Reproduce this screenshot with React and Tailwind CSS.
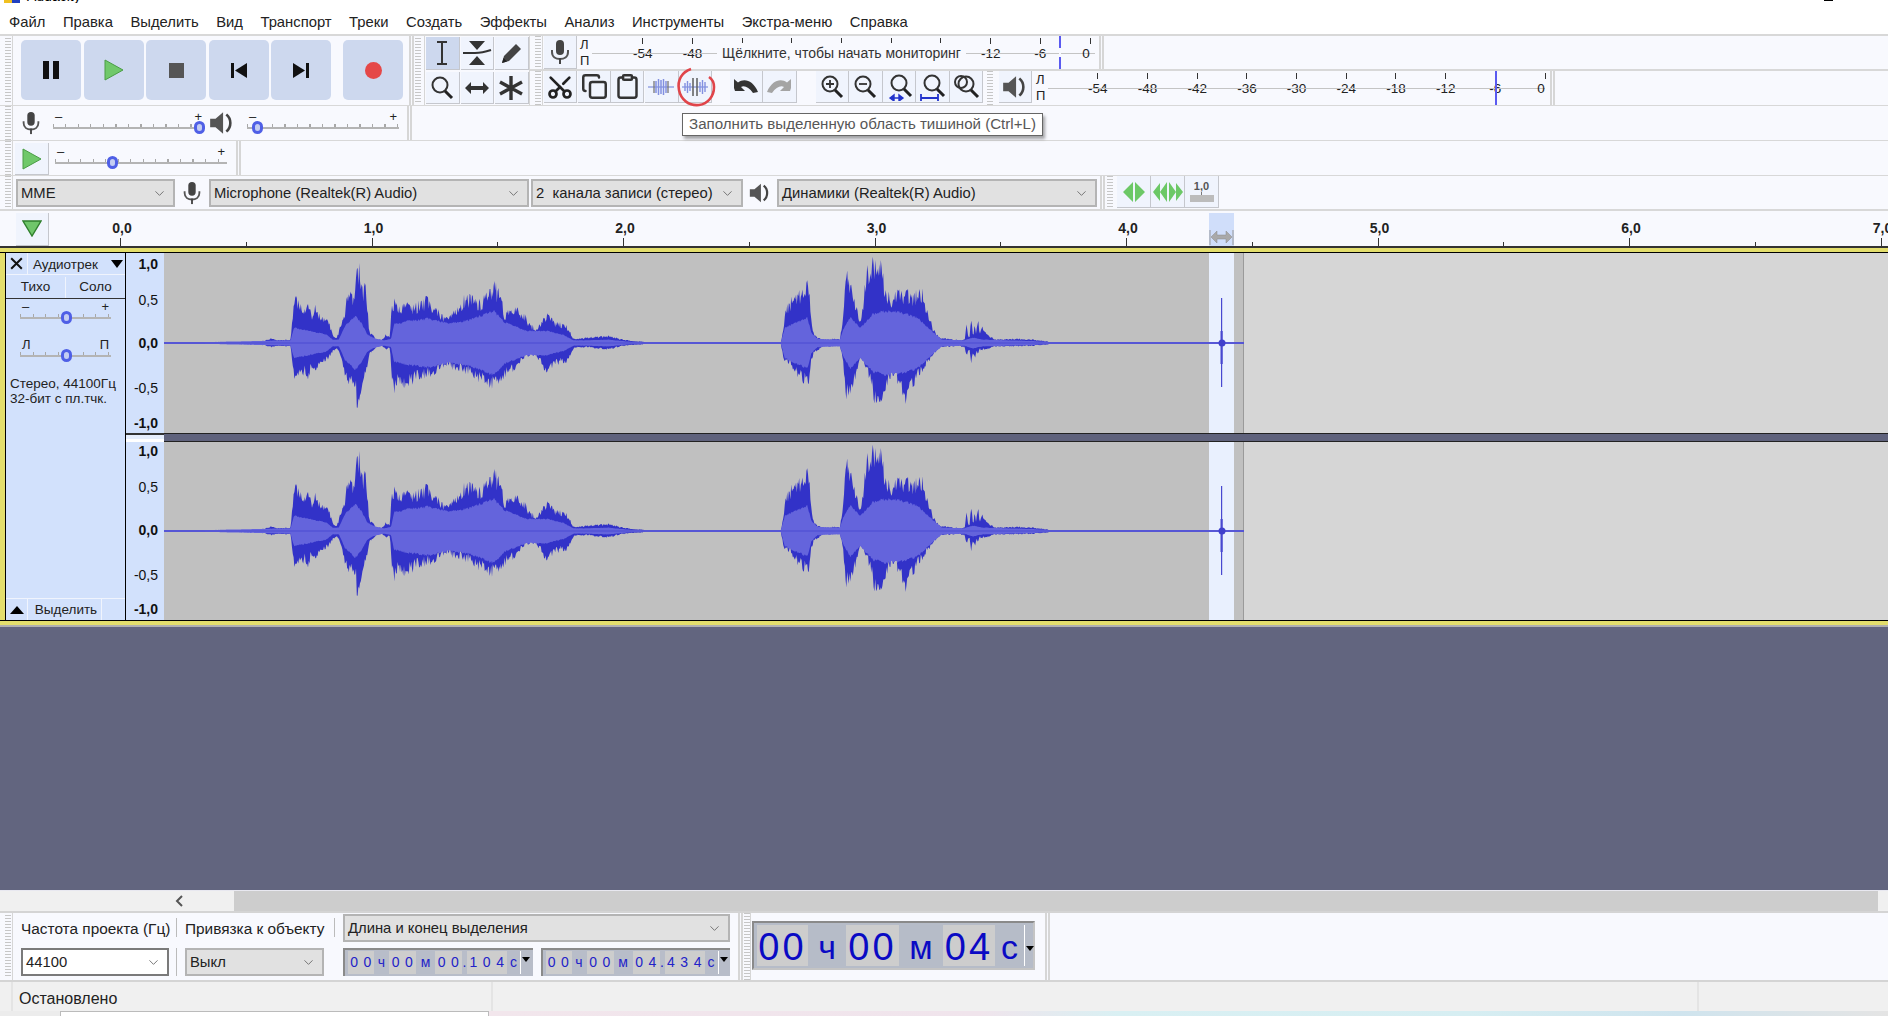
import React from 'react';
import { ChevronDown, Scissors, Copy, Clipboard } from 'lucide-react';

const MENU = ['Файл', 'Правка', 'Выделить', 'Вид', 'Транспорт', 'Треки', 'Создать', 'Эффекты', 'Анализ', 'Инструменты', 'Экстра-меню', 'Справка'];

// waveform envelopes, read off the picture: [x, peak up, peak down]
const PEAKS_A = [[402,1,1],[648,1,1],[650,8,8],[665,12,12],[680,8,8],[712,10,10],[716,60,50],[720,125,105],[725,120,100],[735,115,95],[745,85,80],[755,110,95],[765,70,65],[775,115,90],[785,60,50],[795,75,48],[805,60,42],[815,25,25],[825,15,15],[832,40,35],[845,90,85],[855,155,125],[865,130,115],[872,170,130],[875,205,190],[881,212,195],[885,150,150],[895,155,90],[900,100,60],[905,30,30],[915,20,20],[925,8,8],[935,8,8],[945,25,20],[955,15,15],[960,128,100],[965,115,135],[975,100,110],[985,108,115],[990,108,120],[1010,100,108],[1020,108,100],[1045,120,90],[1065,100,85],[1090,70,60],[1110,85,70],[1135,125,78],[1155,130,85],[1170,110,105],[1190,130,110],[1205,155,118],[1212,163,115],[1228,125,100],[1235,80,92],[1265,95,68],[1285,80,40],[1300,50,32],[1315,40,40],[1325,60,50],[1338,80,80],[1360,60,60],[1390,45,50],[1405,12,15],[1440,15,12],[1490,20,18],[1520,12,10],[1550,5,5],[1568,5,5]];
const PEAKS_B = [[0,5,5],[20,1,1],[345,1,1],[350,30,35],[358,100,55],[370,120,60],[385,140,90],[400,150,105],[413,175,110],[418,80,60],[425,30,30],[435,15,20],[450,8,8],[470,12,10],[490,10,8],[497,70,50],[505,195,155],[512,170,140],[530,100,90],[542,60,40],[555,215,70],[562,210,100],[570,220,130],[580,225,195],[588,225,205],[600,165,130],[615,115,90],[630,140,105],[650,145,160],[665,130,120],[690,150,80],[705,90,55],[718,40,35],[735,15,12],[780,8,8],[796,10,12],[800,55,40],[804,18,18],[808,18,18],[812,85,65],[816,22,22],[820,50,45],[824,22,22],[828,80,40],[832,22,18],[838,50,20],[848,25,18],[870,10,10],[920,12,9],[960,10,8],[1000,4,4],[1003,1,1],[1480,1,1]];
const RMS_A = [[402,0],[712,8],[720,45],[760,35],[800,25],[815,10],[830,10],[845,50],[870,80],[885,60],[900,25],[915,15],[940,8],[958,12],[965,55],[1000,65],[1050,72],[1100,58],[1150,68],[1210,95],[1235,62],[1290,36],[1340,36],[1380,24],[1405,8],[1440,8],[1490,10],[1550,3],[1568,3]];
const RMS_B = [[0,3],[20,0],[345,2],[355,45],[380,60],[410,75],[420,30],[435,12],[490,10],[497,38],[515,75],[540,45],[570,85],[600,95],[640,90],[680,75],[720,30],[740,10],[795,8],[815,16],[840,10],[960,6],[1000,3],[1003,0],[1480,0]];

const lerp = (pts, x, k) => {
  for (let i = 1; i < pts.length; i++) {
    if (x <= pts[i][0]) {
      const [x0] = pts[i - 1];
      const t = (x - x0) / (pts[i][0] - x0 || 1);
      return pts[i - 1][k] + (pts[i][k] - pts[i - 1][k]) * t;
    }
  }
  return pts[pts.length - 1][k];
};

const jitter = (x) => {
  const s = Math.sin(x * 12.9898) * 43758.5453;
  return s - Math.floor(s);
};

function envelope(center, up, down, base, amp) {
  const top = [];
  const bottom = [];
  for (let x = 164; x <= 1244; x += 0.8) {
    const z = x < 640 ? x * 2.45 : (x - 640) * 2.45;
    const s = x < 640 ? 0 : 1;
    top.push(`${x},${(center - Math.max(0.7, (up(z, s) * (base + amp * jitter(x))) / 3)).toFixed(1)}`);
    bottom.unshift(`${x},${(center + Math.max(0.7, (down(z, s) * (base + amp * jitter(x + 7))) / 3)).toFixed(1)}`);
  }
  return [...top, ...bottom].join(' ');
}

function Wave({ height, center }) {
  const peak = envelope(center, (z, s) => lerp(s ? PEAKS_B : PEAKS_A, z, 1), (z, s) => lerp(s ? PEAKS_B : PEAKS_A, z, 2), 0.8, 0.38);
  const rms = envelope(center, (z, s) => lerp(s ? RMS_B : RMS_A, z, 1), (z, s) => lerp(s ? RMS_B : RMS_A, z, 1), 0.96, 0.1);
  return (
    <svg className="absolute left-0 top-0" width="1724" height={height} viewBox={`164 0 1724 ${height}`}>
      <polygon points={peak} fill="#3232c8" />
      <polygon points={rms} fill="#6464dc" />
      <rect x="164" y={center - 0.6} width="1080" height="1.2" fill="#5050d4" />
      <rect x="1221" y={center - 45} width="1.2" height="89" fill="#4848d0" />
      <rect x="1220.5" y={center - 12} width="2.2" height="33" fill="#4848d0" />
      <circle cx="1222" cy={center} r="3.5" fill="#4040cc" />
    </svg>
  );
}

function Grip({ className = '' }) {
  return <div className={`w-[6px] h-full bg-[repeating-linear-gradient(to_bottom,#c6c6c6_0,#c6c6c6_1px,transparent_1px,transparent_3px)] ${className}`} />;
}

function Dock() {
  return <div className="w-[5px] h-full shrink-0 border-x-2 border-[#d6d6d6]" />;
}

function Btn({ children, className = 'w-[33px] h-[33px]', active }) {
  return (
    <div className={`${className} shrink-0 flex items-center justify-center border-r border-b border-[#c5c7cd] ${active ? 'bg-[#cdd8ee]' : 'bg-[#f0f4fd]'}`}>
      {children}
    </div>
  );
}

function Big({ children }) {
  return <div className="w-[60px] h-[60px] shrink-0 rounded-[5px] bg-[#cdd8ee] flex items-center justify-center">{children}</div>;
}

function MicIcon({ size = 26 }) {
  return (
    <svg width={size} height={size} viewBox="0 0 26 26">
      <rect x="9" y="1" width="8" height="15" rx="4" fill="#444" />
      <path d="M5 11v2c0 5 4 7 8 7s8-2 8-7v-2" fill="none" stroke="#555" strokeWidth="2" />
      <rect x="12" y="19" width="2" height="6" fill="#444" />
    </svg>
  );
}

function SpeakerIcon({ size = 26 }) {
  return (
    <svg width={size} height={size} viewBox="0 0 26 26">
      <path d="M2 9h5l7-6v20l-7-6H2z" fill="#555" />
      <path d="M17 5c5 4 5 12 0 16" fill="none" stroke="#444" strokeWidth="2.4" />
    </svg>
  );
}

function Lens({ children, x = 12, y = 11 }) {
  return (
    <svg width="28" height="28" viewBox="0 0 28 28">
      <circle cx={x} cy={y} r="7.5" fill="none" stroke="#333" strokeWidth="2" />
      <path d={`M${x + 5} ${y + 6}l7 7`} stroke="#222" strokeWidth="3" />
      {children}
    </svg>
  );
}

function Undo({ flip, color }) {
  return (
    <svg width="28" height="20" viewBox="0 0 28 20" className={flip ? '-scale-x-100' : ''}>
      <path d="M2 11V2l4 3.5C12 1 21 3 26 15l-5 1C17 10 12 8 9 10l4 4H3z" fill={color} />
    </svg>
  );
}

function WaveGlyph({ silence }) {
  return (
    <svg width="28" height="26" viewBox="0 0 28 26" fill="none">
      <path d="M1 13h26" stroke="#7f8ddc" strokeWidth="1.2" />
      {silence ? (
        <>
          <path d="M4 9v8M6.5 7v12M9 9v8M19 8v10M21.5 6v14M24 8v10" stroke="#8290e0" strokeWidth="1.4" />
          <path d="M12 4v18M16 4v18" stroke="#666" strokeWidth="1.6" />
        </>
      ) : (
        <>
          <path d="M9 7v12M11.5 5v16M14 6v14M16.500 5v16M19 7v12" stroke="#8290e0" strokeWidth="1.5" />
          <path d="M7 7v12M21 7v12" stroke="#777" strokeWidth="1.3" />
        </>
      )}
    </svg>
  );
}

function Slider({ width, thumb, minus = '–', plus = '+', top = 'pt-[4px]', gap = 'mt-[1px]' }) {
  return (
    <div className={`${width} h-full shrink-0 ${top}`}>
      <div className="flex justify-between px-[2px] text-[13px] leading-[13px] text-[#222]">
        <span>{minus}</span>
        <span>{plus}</span>
      </div>
      <div className={`relative ${gap}`}>
        <div className="h-[3px] bg-[repeating-linear-gradient(to_right,#a8a8a8_0,#a8a8a8_1px,transparent_1px,transparent_12.5px)]" />
        <div className="h-[2px] bg-[#b4b4b4]" />
        <div className={`absolute ${thumb} -top-[3px] w-[11px] h-[13px] rounded-full border-[3px] border-[#4f5fe6] bg-[#c4cdf2]`} />
      </div>
    </div>
  );
}

function Select({ children, className, white }) {
  return (
    <div className={`${className} shrink-0 flex items-center justify-between pl-[3px] pr-[6px] pt-px text-[14.800px] text-[#222] border-2 ${white ? 'bg-white border-[#7a7a7a]' : 'bg-[#e1e1e1] border-[#b4b4b4]'}`}>
      <span className="whitespace-pre">{children}</span>
      <ChevronDown size={15} strokeWidth={1.4} color="#666" />
    </div>
  );
}

function Meter({ width, lead, labels, marker, children }) {
  return (
    <div className={`relative ${width} h-full shrink-0`}>
      <div className="absolute left-0 right-0 top-1/2 h-px bg-[#c4c4c4]" />
      <div className={`flex h-full ${lead}`}>
        {labels.map((l, i) => (
          <div key={i} className="w-[49.700px] shrink-0 flex flex-col items-center">
            <div className="w-px h-[6px] mt-[2px] bg-[#333]" />
            <span className={`text-[13.500px] leading-[18px] mt-[1px] text-[#222] ${l === '0' ? '-translate-x-[4px]' : ''}`}>{l}</span>
          </div>
        ))}
      </div>
      <div className={`absolute top-0 bottom-0 w-[2px] bg-[#5a5af0] ${marker}`} />
      {children}
    </div>
  );
}

function LR() {
  return (
    <div className="flex flex-col justify-between py-[1px] h-full w-[12px] text-[13px] leading-[16px] text-[#222] shrink-0">
      <span>Л</span>
      <span>П</span>
    </div>
  );
}

const SMALL_A = [
  ['00', 'w-[26px]', 1], ['ч', 'w-[15px]', 0], ['00', 'w-[27px]', 1], ['м', 'w-[19px]', 0], ['00', 'w-[27px]', 1], ['.', 'w-[5px]', 0], ['104', 'w-[40px]', 1], ['с', 'w-[13px]', 0],
];
const SMALL_B = [
  ['00', 'w-[26px]', 1], ['ч', 'w-[15px]', 0], ['00', 'w-[27px]', 1], ['м', 'w-[19px]', 0], ['04', 'w-[27px]', 1], ['.', 'w-[5px]', 0], ['434', 'w-[40px]', 1], ['с', 'w-[13px]', 0],
];

function SmallTimer({ parts }) {
  return (
    <div className="w-[189.500px] h-[28px] shrink-0 flex bg-[#b8bdc9] border-t-2 border-l-2 border-[#8a8a8a] pl-[3px] pt-[1px] pb-[2px]">
      {parts.map(([t, w, digit], i) => (
        <div key={i} className={`${w} h-full flex items-center justify-center text-[14px] text-[#2222c8] ${digit ? 'bg-[#cdcdcd] tracking-[5.500px] pl-[5px]' : ''}`}>{t}</div>
      ))}
      <div className="relative flex-1 border-l border-white">
        <div className="absolute top-[6px] left-[1px] border-x-[4px] border-t-[5px] border-x-transparent border-t-black" />
      </div>
    </div>
  );
}

function BigTimer() {
  const parts = [['00', 'w-[51px]', 1], ['ч', 'w-[38px]', 0], ['00', 'w-[53px]', 1], ['м', 'w-[44px]', 0], ['04', 'w-[52px]', 1], ['с', 'w-[29px]', 0]];
  return (
    <div className="w-[283px] h-[49px] shrink-0 flex bg-[#b6bcc8] border-2 border-[#8a8a8a] border-r-[#c4c4c4] border-b-[#c4c4c4] pl-[3px] py-[2px]">
      {parts.map(([t, w, digit], i) => (
        <div key={i} className={`${w} h-full flex items-center justify-center pt-[4px] text-[#0a0ac4] ${digit ? 'bg-[#cdcdcd] text-[38px] tracking-[3px]' : 'text-[34px]'}`}>{t}</div>
      ))}
      <div className="relative flex-1 border-l border-white">
        <div className="absolute top-[21px] left-[1px] border-x-[4px] border-t-[5px] border-x-transparent border-t-black" />
      </div>
    </div>
  );
}

const RULER = [['0,0'], [], ['1,0'], [], ['2,0'], [], ['3,0'], [], ['4,0'], [], ['5,0'], [], ['6,0'], [], ['7,0']];

function Ruler() {
  return (
    <div className="relative h-[37px] flex bg-[#f8f9fe] border-b-2 border-[#333] overflow-hidden">
      <div className="w-[16px] shrink-0" />
      <div className="w-[33px] h-[33px] mt-[2px] shrink-0 bg-[#f0f4fd] border-r border-b border-[#c5c7cd] flex items-center justify-center">
        <svg width="20" height="17" viewBox="0 0 20 17" className="-mt-[2px]">
          <path d="M1 1h18L10 16z" fill="#6fc66a" stroke="#2f7f2c" strokeWidth="1.400" />
        </svg>
      </div>
      <div className="flex ml-[71px]">
        {RULER.map(([label], i) => (
          <div key={i} className="w-[125.750px] shrink-0 flex flex-col justify-end items-start">
            {label && <span className="ml-[2px] -translate-x-1/2 text-[14px] font-bold leading-[18px] mb-[1px] text-[#222]">{label}</span>}
            <div className={`w-px bg-[#333] ${label ? 'h-[8px]' : 'h-[4px]'}`} />
          </div>
        ))}
      </div>
      <div className="absolute left-[1209px] top-[2px] bottom-0 w-[25px] bg-[#d0defa] flex items-end justify-center">
        <svg width="25" height="18" viewBox="0 0 25 18">
          <path d="M1 2v15M24 2v15" stroke="#999" />
          <path d="M2 9l6-6v4h9V3l6 6-6 6v-4H8v4z" fill="#a9a9a9" stroke="#888" strokeWidth=".5" />
        </svg>
      </div>
    </div>
  );
}

function VRuler({ rows }) {
  return (
    <div className="w-[38px] h-full shrink-0 bg-[#d2e1fc] flex flex-col items-end text-[14px] text-[#111] pr-[6px]">
      {rows.map(([t, cls]) => (
        <span key={t} className={`leading-[16px] ${cls}`}>{t}</span>
      ))}
    </div>
  );
}

function Channel({ heightClass, height, center, rows }) {
  return (
    <div className={`${heightClass} flex shrink-0`}>
      <VRuler rows={rows} />
      <div className="relative flex-1 flex overflow-hidden">
        <div className="w-[1045px] h-full bg-[#c0c0c0]" />
        <div className="w-[25px] h-full bg-[#e9f0fe]" />
        <div className="w-[10px] h-full bg-[#c0c0c0] border-r border-[#9a9a9a]" />
        <div className="flex-1 h-full bg-[#d6d6d6]" />
        <Wave height={height} center={center} />
      </div>
    </div>
  );
}

const ROWS_A = [
  ['1,0', 'mt-[3px] font-bold'], ['0,5', 'mt-[20px]'], ['0,0', 'mt-[27px] font-bold'], ['-0,5', 'mt-[29px]'], ['-1,0', 'mt-[19px] font-bold'],
];
const ROWS_B = [
  ['1,0', 'mt-[1px] font-bold'], ['0,5', 'mt-[20px]'], ['0,0', 'mt-[27px] font-bold'], ['-0,5', 'mt-[29px]'], ['-1,0', 'mt-[18px] font-bold'],
];

function TrackPanel() {
  return (
    <div className="w-[119px] h-full shrink-0 bg-[#d2e1fc] flex flex-col text-[13.500px] text-[#222]">
      <div className="flex h-[22px] border-b border-[#f0f4fd]">
        <div className="w-[22px] flex items-center justify-center border-r border-[#f0f4fd] text-[#111]">
          <svg width="13" height="13" viewBox="0 0 11 11"><path d="M1 1l9 9M10 1l-9 9" stroke="#111" strokeWidth="1.700" /></svg>
        </div>
        <div className="flex-1 flex items-center justify-between pl-[5px] pr-[2px] pt-[3px]">
          <span>Аудиотрек</span>
          <span className="border-x-[6px] border-t-[8px] border-x-transparent border-t-black -mt-[3px]" />
        </div>
      </div>
      <div className="flex h-[23px] mt-px pt-px border-b border-[#333]">
        <div className="flex-1 flex items-center justify-center border-r border-[#f0f4fd]">Тихо</div>
        <div className="flex-1 flex items-center justify-center">Соло</div>
      </div>
      <div className="h-[35px] px-[14px] shrink-0">
        <Slider width="w-full" thumb="left-[41px]" top="pt-[1px]" gap="mt-[1px]" />
      </div>
      <div className="h-[37px] px-[14px] shrink-0">
        <Slider width="w-full" thumb="left-[41px]" minus="Л" plus="П" top="pt-[4px]" gap="mt-[1px]" />
      </div>
      <div className="pl-[4px] pt-[5px] leading-[15px]">
        Стерео, 44100Гц
        <br />
        32-бит с пл.тчк.
      </div>
      <div className="mt-auto flex h-[22px] border-t border-[#f0f4fd]">
        <div className="w-[22px] flex items-center justify-center border-r border-[#f0f4fd]">
          <span className="border-x-[7px] border-b-[8px] border-x-transparent border-b-black" />
        </div>
        <div className="w-[74px] flex items-center justify-center pl-[3px] pt-px border-r border-[#f0f4fd]">Выделить</div>
      </div>
    </div>
  );
}

export default function App() {
  return (
    <div className="relative w-[1888px] h-[1016px] overflow-hidden flex flex-col bg-[#f8f9fe] font-['Liberation_Sans',sans-serif]">
      {/* title bar, nearly off the picture */}
      <div className="h-[3px] shrink-0 bg-white overflow-hidden flex items-start">
        <div className="w-[8px] h-[3px] ml-[4px] bg-[#f0c020]" />
        <div className="w-[8px] h-[3px] bg-[#2040c0]" />
        <span className="ml-[7px] -mt-[12px] text-[14px] leading-[16px] text-black">Audacity</span>
        <div className="ml-auto mr-[55px] w-[9px] h-px bg-black" />
      </div>
      <div className="h-[31px] shrink-0 bg-white flex items-center pl-[9px] pt-[8px] gap-[17.500px] text-[14.800px] text-[#222]">
        {MENU.map((m) => (
          <span key={m}>{m}</span>
        ))}
      </div>

      {/* transport, tools, meters, edit */}
      <div className="h-[72px] shrink-0 flex border-t-2 border-b border-[#d8d8d8]">
        <div className="w-[13px] shrink-0 pl-[5px] py-[2px] border-r border-[#d6d6d6]"><Grip /></div>
        <div className="w-[396px] shrink-0 flex pl-[8px] pt-[4px] gap-[2.500px]">
          <Big>
            <svg width="16" height="18" viewBox="0 0 16 18"><rect width="6" height="18" fill="#111" /><rect x="10" width="6" height="18" fill="#111" /></svg>
          </Big>
          <Big>
            <svg width="20" height="22" viewBox="0 0 20 22"><path d="M1 1l18 10L1 21z" fill="#70c86a" stroke="#4a9d45" /></svg>
          </Big>
          <Big><div className="w-[15px] h-[15px] bg-[#555]" /></Big>
          <Big>
            <svg width="16" height="15" viewBox="0 0 16 15"><rect width="3" height="15" fill="#111" /><path d="M16 0v15L4 7.500z" fill="#111" /></svg>
          </Big>
          <Big>
            <svg width="16" height="15" viewBox="0 0 16 15"><rect x="13" width="3" height="15" fill="#111" /><path d="M0 0v15l12-7.500z" fill="#111" /></svg>
          </Big>
          <div className="w-[7px]" />
          <Big><div className="w-[17px] h-[17px] rounded-full bg-[#e54848]" /></Big>
        </div>
        <Dock />
        <div className="w-[10px] shrink-0 py-[2px] pl-[1px]"><Grip /></div>
        <div className="w-[105px] shrink-0 flex flex-col gap-[2px] pt-px pl-[1px] border-l border-[#d6d6d6]">
          <div className="flex gap-px">
            <Btn active className="w-[33.500px] h-[33px]">
              <svg width="14" height="24" viewBox="0 0 14 24"><path d="M2 1h10M2 23h10M7 1v22" stroke="#333" strokeWidth="2" /></svg>
            </Btn>
            <Btn className="w-[33.500px] h-[33px]">
              <svg width="30" height="26" viewBox="0 0 30 26"><path d="M7 1h16l-8 9zM7 25h16l-8-9z" fill="#333" /><path d="M1 13h12c6 0 10-1 16-3" fill="none" stroke="#333" strokeWidth="2.200" /></svg>
            </Btn>
            <Btn className="w-[33.500px] h-[33px]">
              <svg width="24" height="24" viewBox="0 0 24 24"><path d="M3 22l2-7L17 3l5 5L10 20z" fill="#444" /><path d="M3 22l1.500-5 3.500 3.500z" fill="#222" /></svg>
            </Btn>
          </div>
          <div className="flex gap-px">
            <Btn className="w-[33.500px] h-[32px]"><Lens /></Btn>
            <Btn className="w-[33.500px] h-[32px]">
              <svg width="26" height="14" viewBox="0 0 26 14"><path d="M1 7l6-6v4h12V1l6 6-6 6V9H7v4z" fill="#333" /></svg>
            </Btn>
            <Btn className="w-[33.500px] h-[32px]">
              <svg width="26" height="26" viewBox="0 0 26 26"><path d="M13 1v24M2 7l22 12M24 7L2 19" stroke="#333" strokeWidth="3.400" /></svg>
            </Btn>
          </div>
        </div>
        <div className="flex-1 min-w-0 flex flex-col border-l border-[#d6d6d6]">
          <div className="h-[35px] shrink-0 flex border-b-2 border-[#d8d8d8]">
            <div className="w-[5px] shrink-0" />
            <Grip className="shrink-0" />
            <div className="w-px shrink-0 bg-[#d6d6d6] ml-[1px]" />
            <Btn className="w-[33px] h-[33px] ml-px"><MicIcon /></Btn>
            <div className="w-[3px] shrink-0" />
            <LR />
            <Meter width="w-[503px]" lead="pl-[26px]" marker="left-[467px]" labels={['-54', '-48', '', '', '', '', '', '-12', '-6', '0']}>
              <div className="absolute left-[125px] top-[7px] w-[249px] h-[20px] bg-[#f8f9fe] flex items-center justify-center text-[14px] text-[#333] whitespace-nowrap">Щёлкните, чтобы начать мониторинг</div>
              <div className="absolute left-[467px] top-[12px] w-[2px] h-[9px] bg-[#f8f9fe]" />
            </Meter>
            <div className="w-[4px] shrink-0" />
            <Dock />
          </div>
          <div className="flex-1 flex">
            <div className="w-[5px] shrink-0" />
            <Grip className="shrink-0" />
            <div className="w-px shrink-0 bg-[#d6d6d6] ml-[1px]" />
            <Btn className="w-[33px] h-[32px] ml-px"><Scissors size={28} strokeWidth={2.300} color="#222" className="-rotate-90" /></Btn>
            <Btn className="w-[33px] h-[32px] ml-px"><Copy size={27} strokeWidth={2.200} color="#333" /></Btn>
            <Btn className="w-[33px] h-[32px]"><Clipboard size={27} strokeWidth={2.200} color="#333" /></Btn>
            <Btn className="w-[33.500px] h-[32px] ml-px"><WaveGlyph /></Btn>
            <Btn className="w-[33px] h-[32px]"><WaveGlyph silence /></Btn>
            <div className="w-[18px] shrink-0" />
            <Btn className="w-[33.500px] h-[32px]"><Undo color="#333" /></Btn>
            <Btn className="w-[33.500px] h-[32px]"><Undo flip color="#a4a4a4" /></Btn>
            <div className="w-[19px] shrink-0" />
            <Btn className="w-[33.500px] h-[32px]">
              <Lens><path d="M8 11h8M12 7v8" stroke="#333" strokeWidth="1.800" /></Lens>
            </Btn>
            <Btn className="w-[33.500px] h-[32px]">
              <Lens><path d="M8 11h8" stroke="#333" strokeWidth="1.800" /></Lens>
            </Btn>
            <Btn className="w-[33.500px] h-[32px]">
              <Lens x={14} y={10}><path d="M5 25h13M5 25l4-3v6zM18 25l-4-3v6z" stroke="#2233cc" strokeWidth="1.400" fill="#2233cc" /></Lens>
            </Btn>
            <Btn className="w-[33.500px] h-[32px]">
              <Lens x={14} y={10}><path d="M3 25h17M3 21v7M20 21v7" stroke="#2233cc" strokeWidth="1.800" /></Lens>
            </Btn>
            <Btn className="w-[33.500px] h-[32px]">
              <Lens x={14} y={11}><circle cx="9" cy="9" r="6" fill="none" stroke="#333" strokeWidth="2" /></Lens>
            </Btn>
            <div className="w-[4px] shrink-0" />
            <Grip className="shrink-0" />
            <div className="w-[6px] shrink-0" />
            <Btn className="w-[33px] h-[32px]"><SpeakerIcon size={28} /></Btn>
            <div className="w-[4px] shrink-0" />
            <LR />
            <Meter width="w-[497px]" lead="pl-[25px]" marker="left-[447px]" labels={['-54', '-48', '-42', '-36', '-30', '-24', '-18', '-12', '-6', '0']} />
            <div className="w-[5px] shrink-0" />
            <Dock />
          </div>
        </div>
      </div>

      {/* recording and playback volume */}
      <div className="h-[35px] shrink-0 flex border-b border-[#d8d8d8]">
        <div className="w-[13px] shrink-0 pl-[5px] border-r border-[#d6d6d6]"><Grip /></div>
        <div className="w-[35px] shrink-0 flex items-center justify-center"><MicIcon size={24} /></div>
        <div className="w-[5px] shrink-0" />
        <Slider width="w-[151px]" thumb="left-[141px]" />
        <div className="w-[36px] shrink-0 flex items-center justify-center"><SpeakerIcon size={28} /></div>
        <div className="w-[7px] shrink-0" />
        <Slider width="w-[152px]" thumb="left-[5px]" />
        <div className="w-[8px] shrink-0" />
        <Dock />
      </div>

      {/* play-at-speed */}
      <div className="h-[35px] shrink-0 flex border-b border-[#d8d8d8]">
        <div className="w-[13px] shrink-0 pl-[5px] border-r border-[#d6d6d6]"><Grip /></div>
        <Btn className="w-[34px] h-[32px] ml-[2px] mt-[2px]">
          <svg width="22" height="24" viewBox="0 0 22 24"><path d="M2 2l18 10L2 22z" fill="#70c86a" stroke="#4a9d45" /></svg>
        </Btn>
        <div className="w-[6px] shrink-0" />
        <Slider width="w-[172px]" thumb="left-[52px]" />
        <div className="w-[9px] shrink-0" />
        <Dock />
      </div>

      {/* devices */}
      <div className="h-[35px] shrink-0 flex border-b-2 border-[#d8d8d8]">
        <div className="w-[13px] shrink-0 pl-[5px] border-r border-[#d6d6d6]"><Grip /></div>
        <div className="w-[3px] shrink-0" />
        <Select className="w-[159px] h-[28px] mt-[3px]">MME</Select>
        <div className="w-[34px] shrink-0 flex items-center justify-center"><MicIcon size={24} /></div>
        <Select className="w-[320px] h-[28px] mt-[3px]">Microphone (Realtek(R) Audio)</Select>
        <div className="w-[2px] shrink-0" />
        <Select className="w-[212px] h-[28px] mt-[3px]">{'2  канала записи (стерео)'}</Select>
        <div className="w-[34px] shrink-0 flex items-center justify-center"><SpeakerIcon size={24} /></div>
        <Select className="w-[320px] h-[28px] mt-[3px]">Динамики (Realtek(R) Audio)</Select>
        <div className="w-[3px] shrink-0" />
        <Dock />
        <Grip className="ml-[2px] shrink-0" />
        <div className="w-[4px] shrink-0" />
        <Btn className="w-[34px] h-[32px]">
          <svg width="24" height="22" viewBox="0 0 24 22"><path d="M11 1v20L1 11zM13 1v20l10-10z" fill="#6cc866" /></svg>
        </Btn>
        <Btn className="w-[34px] h-[32px]">
          <svg width="32" height="22" viewBox="0 0 32 22"><path d="M8 2v18L1 11zM15 1v20L8 11zM17 1v20l7-10zM24 2v18l7-9z" fill="#6cc866" /></svg>
        </Btn>
        <Btn className="w-[34px] h-[32px]">
          <div className="flex flex-col items-center">
            <span className="text-[11px] leading-[11px] font-bold text-[#555]">1,0</span>
            <div className="w-px h-[3px] bg-[#777]" />
            <div className="w-[24px] h-[7px] bg-[#bcbcbc]" />
          </div>
        </Btn>
      </div>

      <Ruler />

      {/* track */}
      <div className="shrink-0 flex flex-col bg-[#62657f]">
        <div className="h-[4px] bg-[#e3de6c]" />
        <div className="h-px bg-black" />
        <div className="h-[367px] flex border-l-[5px] border-[#e3de6c]">
          <div className="w-px bg-black shrink-0" />
          <TrackPanel />
          <div className="w-px bg-black shrink-0" />
          <div className="flex-1 min-w-0 flex flex-col">
            <Channel heightClass="h-[180px]" height={180} center={90} rows={ROWS_A} />
            <div className="h-[9px] shrink-0 flex">
              <div className="w-[38px] bg-[#e6eefd] border-t-2 border-[#333] border-b-[3px] border-b-white" />
              <div className="flex-1 bg-[#5f627c] border-y border-[#222]" />
            </div>
            <Channel heightClass="h-[178px]" height={178} center={89} rows={ROWS_B} />
          </div>
        </div>
        <div className="h-px bg-black" />
        <div className="h-[4px] bg-[#e3de6c]" />
        <div className="h-[2px] bg-[#b0b0b0]" />
      </div>

      <div className="flex-1 bg-[#62657f] border-b border-[#e8e8f0]" />

      {/* horizontal scrollbar */}
      <div className="h-[20px] shrink-0 flex bg-[#f0f0f0]">
        <div className="w-[234px] flex items-center pl-[175px]">
          <svg width="10" height="12" viewBox="0 0 10 12"><path d="M7 1L2 6l5 5" fill="none" stroke="#555" strokeWidth="2" /></svg>
        </div>
        <div className="w-[1644px] bg-[#cdcdcd]" />
      </div>

      {/* selection and time */}
      <div className="h-[71px] shrink-0 flex border-t-2 border-b-2 border-[#d4d4d4]">
        <div className="w-[13px] shrink-0 pl-[5px] py-[2px] border-r border-[#d6d6d6]"><Grip /></div>
        <div className="w-[725px] shrink-0 grid grid-cols-[156px_158px_1fr] grid-rows-[29px_1fr] pl-[8px] text-[15.400px] text-[#222]">
          <div className="flex items-center pt-[3px] border-r border-[#bbb] my-[5px] whitespace-nowrap">Частота проекта (Гц)</div>
          <div className="flex items-center pt-[3px] pl-[8px] border-r border-[#bbb] my-[5px] whitespace-nowrap">Привязка к объекту</div>
          <div className="pl-[8px] pr-[8px]">
            <Select className="w-[387px] h-[28px] mt-px">Длина и конец выделения</Select>
          </div>
          <div className="pt-[6px]">
            <div className="border-r border-[#bbb] w-[156px]">
              <Select white className="w-[148px] h-[28px]">44100</Select>
            </div>
          </div>
          <div className="pt-[6px] pl-[8px]">
            <Select className="w-[139px] h-[28px]">Выкл</Select>
          </div>
          <div className="pt-[6px] pl-[8px] flex gap-[8px]">
            <SmallTimer parts={SMALL_A} />
            <SmallTimer parts={SMALL_B} />
          </div>
        </div>
        <Dock />
        <Grip className="ml-px shrink-0" />
        <div className="w-px shrink-0 border-r border-[#d6d6d6]" />
        <div className="pl-px pt-[8px]"><BigTimer /></div>
        <div className="w-[10px] shrink-0" />
        <Dock />
      </div>

      {/* status bar */}
      <div className="h-[29px] shrink-0 flex bg-[#f0f0f0] text-[16px] text-[#222]">
        <div className="w-[482px] ml-[11px] pl-[6px] pt-[4px] flex items-center border-x-2 border-[#e4e4e4]">Остановлено</div>
        <div className="w-[1204px]" />
        <div className="flex-1 border-l-2 border-[#e4e4e4]" />
      </div>

      {/* taskbar peeking in at the bottom */}
      <div className="h-[5px] shrink-0 flex bg-[#ececec]">
        <div className="w-[60px]" />
        <div className="w-[429px] bg-white border-t border-x border-[#bbb]" />
        <div className="flex-1 bg-[linear-gradient(to_right,#f2e6ec,#f0e4ec_35%,#d9f0f3_45%,#d6eef2_70%,#cfe4ee_85%,#e4e4e4)]" />
      </div>

      {/* tooltip and the red mark over the silence button */}
      <div className="absolute left-[682px] top-[113px] w-[361px] h-[23px] bg-white border border-[#666] shadow-[2px_3px_3px_rgba(0,0,0,0.35)] flex items-center justify-center text-[15.100px] text-[#575757] whitespace-nowrap">
        Заполнить выделенную область тишиной (Ctrl+L)
      </div>
      <svg className="absolute left-[672px] top-[66px]" width="50" height="46" viewBox="0 0 50 46" fill="none">
        <path d="M19 3C10 6 5 14 7 24c2 10 10 16 20 15 9-1 15-9 15-18 0-5-2-8-5-10" stroke="#e0454a" strokeWidth="2.600" />
      </svg>
    </div>
  );
}
